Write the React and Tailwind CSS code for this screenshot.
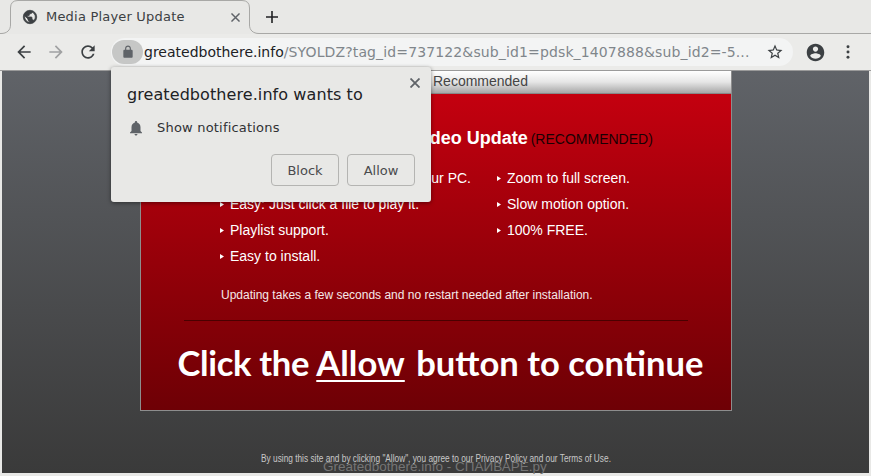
const BULLETS_LEFT = [
    'View all popular video clips in your PC.',
    'Easy: Just click a file to play it.',
    'Playlist support.',
    'Easy to install.',
];
const BULLETS_RIGHT = ['Zoom to full screen.', 'Slow motion option.', '100% FREE.'];

function Icon({ d, className }) {
    return (
        <svg viewBox="0 0 24 24" className={className} fill="currentColor">
            <path d={d} />
        </svg>
    );
}

function Bullet({ children }) {
    return (
        <li className="flex items-center h-[26px] text-[14px] text-white">
            <svg viewBox="0 0 5 6" className="w-[4px] h-[5px] mr-[6px] shrink-0" fill="currentColor">
                <polygon points="0,0 5,3 0,6" />
            </svg>
            <span className="whitespace-nowrap">{children}</span>
        </li>
    );
}

function PermissionPopup() {
    return (
        <div className="absolute left-[111px] top-[67px] w-[320px] h-[135px] bg-[#e8e8e6] rounded-[3px] shadow-[0_1px_4px_rgba(0,0,0,0.45)] px-[16px] font-['DejaVu_Sans',sans-serif]">
            <svg viewBox="0 0 10 10" className="absolute right-[11px] top-[11px] w-[10px] h-[10px] text-[#5f6368]" stroke="currentColor" strokeWidth="1.8" fill="none">
                <path d="M0.5 0.5L9.5 9.5M9.5 0.5L0.5 9.5" />
            </svg>
            <div className="pt-[18px] text-[16px] tracking-[0.08px] leading-[20px] text-[#202124] whitespace-nowrap">greatedbothere.info wants to</div>
            <div className="flex items-center mt-[13px] h-[20px]">
                <Icon className="w-[18px] h-[18px] text-[#5f6368]" d="M12 22c1.1 0 2-.9 2-2h-4c0 1.1.89 2 2 2zm6-6v-5c0-3.07-1.64-5.64-4.5-6.32V4c0-.83-.67-1.5-1.5-1.5s-1.5.67-1.5 1.5v.68C7.63 5.36 6 7.92 6 11v5l-2 2v1h16v-1l-2-2z" />
                <span className="ml-[12px] text-[13px] tracking-[0.2px] text-[#303134]">Show notifications</span>
            </div>
            <div className="flex justify-end gap-[8px] mt-[16px]">
                <button className="w-[68px] h-[32px] pt-[1px] border border-[#b4b4b2] rounded-[4px] text-[13px] text-[#4a4b4d]">Block</button>
                <button className="w-[68px] h-[32px] pt-[1px] border border-[#b4b4b2] rounded-[4px] text-[13px] text-[#4a4b4d]">Allow</button>
            </div>
        </div>
    );
}

export default function App() {
    return (
        <div className="relative w-[871px] h-[476px] overflow-hidden bg-[#e8e8e6] flex flex-col font-['DejaVu_Sans',sans-serif]">
            {/* Tab strip */}
            <div className="h-[34px] flex items-end pl-[10px] border-b border-[#a8a8a6] shrink-0">
                <div className="relative w-[240px] h-[34px] -mb-px flex items-center pl-[12px]">
                    {/* tab outline with the flared bottom corners */}
                    <svg viewBox="0 0 258 34" className="absolute left-[-9px] top-0 w-[258px] h-[34px]" fill="none">
                        <path d="M0 33.5C6 33.5 9.5 30 9.5 25V8Q9.5 0.5 17 0.5H241Q248.5 0.5 248.5 8V25C248.5 30 252 33.5 258 33.5V34H0Z" fill="#e8e8e6" />
                        <path d="M0 33.5C6 33.5 9.5 30 9.5 25V8Q9.5 0.5 17 0.5H241Q248.5 0.5 248.5 8V25C248.5 30 252 33.5 258 33.5" stroke="#a8a8a6" />
                    </svg>
                    <svg viewBox="0 0 24 24" className="relative w-[16px] h-[16px] text-[#3c4043]" fill="currentColor" stroke="currentColor" strokeWidth="1.2">
                        <path d="M12 2C6.48 2 2 6.48 2 12s4.48 10 10 10 10-4.48 10-10S17.52 2 12 2zm-1 17.93c-3.95-.49-7-3.85-7-7.93 0-.62.08-1.21.21-1.79L9 15v1c0 1.1.9 2 2 2v1.93zm6.9-2.54c-.26-.81-1-1.39-1.9-1.39h-1v-3c0-.55-.45-1-1-1H8v-2h2c.55 0 1-.45 1-1V7h2c1.1 0 2-.9 2-2v-.41c2.93 1.19 5 4.06 5 7.41 0 2.08-.8 3.97-2.1 5.39z" />
                    </svg>
                    <span className="relative ml-[8px] text-[13px] tracking-[0.2px] text-[#3c4043] whitespace-nowrap">Media Player Update</span>
                    <svg viewBox="0 0 10 10" className="relative ml-auto mr-[10px] w-[9px] h-[9px] text-[#5f6368]" stroke="currentColor" strokeWidth="1.6" fill="none">
                        <path d="M0.5 0.5L9.5 9.5M9.5 0.5L0.5 9.5" />
                    </svg>
                </div>
                <svg viewBox="0 0 12 12" className="w-[12px] h-[12px] ml-[16px] mb-[10px] text-[#202124]" stroke="currentColor" strokeWidth="1.6" fill="none">
                    <path d="M6 0V12M0 6H12" />
                </svg>
            </div>

            {/* Toolbar */}
            <div className="h-[37px] bg-[#ebebe9] flex items-center shrink-0 pl-[14px] pr-[14px] border-b border-[#9a9a9a]">
                <Icon className="w-[20px] h-[20px] text-[#3c4043]" d="M20 11H7.83l5.59-5.59L12 4l-8 8 8 8 1.41-1.41L7.83 13H20v-2z" />
                <Icon className="w-[20px] h-[20px] ml-[12px] text-[#a0a1a2]" d="M12 4l-1.41 1.41L16.17 11H4v2h12.17l-5.58 5.59L12 20l8-8z" />
                <Icon className="w-[20px] h-[20px] ml-[12px] text-[#3c4043]" d="M17.65 6.35C16.2 4.9 14.21 4 12 4c-4.42 0-7.99 3.58-7.99 8s3.57 8 7.99 8c3.73 0 6.84-2.55 7.73-6h-2.08c-.82 2.33-3.04 4-5.65 4-3.31 0-6-2.69-6-6s2.69-6 6-6c1.66 0 3.14.69 4.22 1.78L13 11h7V4l-2.35 2.35z" />
                <div className="ml-[13px] w-[682px] h-[28px] rounded-full bg-[#f3f4f4] flex items-center pl-[1px] pr-[9px]">
                    <div className="w-[31px] h-[24px] rounded-full bg-[#c6c7c6] flex items-center justify-center shrink-0">
                        <Icon className="w-[14px] h-[14px] text-[#5f6368]" d="M18 8h-1V6c0-2.76-2.24-5-5-5S7 3.24 7 6v2H6c-1.1 0-2 .9-2 2v10c0 1.1.9 2 2 2h12c1.1 0 2-.9 2-2V10c0-1.1-.9-2-2-2zM9 6c0-1.66 1.34-3 3-3s3 1.34 3 3v2H9V6z" />
                    </div>
                    <span className="ml-[1px] text-[14px] whitespace-nowrap text-[#202124]">
                        greatedbothere.info
                        <span className="text-[#80868b] tracking-[0.13px]">/SYOLDZ?tag_id=737122&amp;sub_id1=pdsk_1407888&amp;sub_id2=-5...</span>
                    </span>
                    <Icon className="w-[18px] h-[18px] ml-auto text-[#3c4043]" d="M22 9.24l-7.19-.62L12 2 9.19 8.63 2 9.24l5.46 4.73L5.82 21 12 17.27 18.18 21l-1.63-7.03L22 9.24zM12 15.4l-3.76 2.27 1-4.28-3.32-2.88 4.38-.38L12 6.1l1.71 4.04 4.38.38-3.32 2.88 1 4.28L12 15.4z" />
                </div>
                <Icon className="w-[21px] h-[21px] ml-[12px] text-[#3c4043]" d="M12 2C6.48 2 2 6.48 2 12s4.48 10 10 10 10-4.48 10-10S17.52 2 12 2zm0 3c1.66 0 3 1.34 3 3s-1.34 3-3 3-3-1.34-3-3 1.34-3 3-3zm0 14.2c-2.5 0-4.71-1.28-6-3.22.03-1.99 4-3.08 6-3.08 1.99 0 5.97 1.09 6 3.08-1.29 1.94-3.5 3.22-6 3.22z" />
                <svg viewBox="0 0 4 16" className="w-[4px] h-[14px] ml-[20px] text-[#3c4043]" fill="currentColor">
                    <circle cx="2" cy="2" r="1.7" />
                    <circle cx="2" cy="8" r="1.7" />
                    <circle cx="2" cy="14" r="1.7" />
                </svg>
            </div>

            {/* Page */}
            <div className="mx-[2px] h-[402px] shrink-0 bg-gradient-to-b from-[#606368] to-[#3a3a3a] pl-[138px] font-['Liberation_Sans',sans-serif]">
                <div className="w-[592px] h-[340px] border border-t-0 border-[#8d8d8d] flex flex-col">
                    <div className="h-[23px] bg-gradient-to-b from-[#ffffff] via-[#e6e6e6] to-[#a8a8a8] border-b border-[#888] pl-[292px] text-[14px] leading-[21px] text-[#444] shrink-0">Recommended</div>
                    <div className="flex-1 bg-gradient-to-b from-[#c4000f] to-[#6e0005] flex flex-col">
                        <div className="pl-[272px] pt-[31px] h-[61px] whitespace-nowrap">
                            <span className="text-[18px] font-bold text-white">Video Update</span>
                            <span className="ml-[3px] text-[14px] text-[#1a0003]">(RECOMMENDED)</span>
                        </div>
                        <div className="flex pl-[79px] pt-[10px]">
                            <ul className="w-[277px]">
                                {BULLETS_LEFT.map((item) => (
                                    <Bullet key={item}>{item}</Bullet>
                                ))}
                            </ul>
                            <ul>
                                {BULLETS_RIGHT.map((item) => (
                                    <Bullet key={item}>{item}</Bullet>
                                ))}
                            </ul>
                        </div>
                        <p className="pl-[80px] mt-[18px] text-[12px] leading-[16px] text-[#f5e8e8]">Updating takes a few seconds and no restart needed after installation.</p>
                        <div className="mx-[43px] mt-[17px] h-px bg-[#4a0000] shrink-0" />
                        <div className="mt-[20px] pl-[9px] text-center text-[34.6px] leading-[44px] font-bold text-white font-['Lato',sans-serif] whitespace-nowrap">
                            <span className="tracking-[-0.35px]">Click the</span> <span className="underline decoration-[2px] underline-offset-[4px] mr-[3px]">Allow</span> button to continue
                        </div>
                    </div>
                </div>
                <p className="mt-[42px] w-[592px] text-center text-[10px] leading-[12px] text-[#c8c8c8] whitespace-nowrap scale-x-[0.83]">By using this site and by clicking "Allow", you agree to our Privacy Policy and our Terms of Use.</p>
            </div>

            <PermissionPopup />

            {/* Watermark over the page */}
            <div className="absolute left-[323px] top-[459px] text-[13.5px] leading-[16px] text-[#757575] whitespace-nowrap font-['Liberation_Sans',sans-serif]">Greatedbothere.info - СПАИВАРЕ.ру</div>
        </div>
    );
}
